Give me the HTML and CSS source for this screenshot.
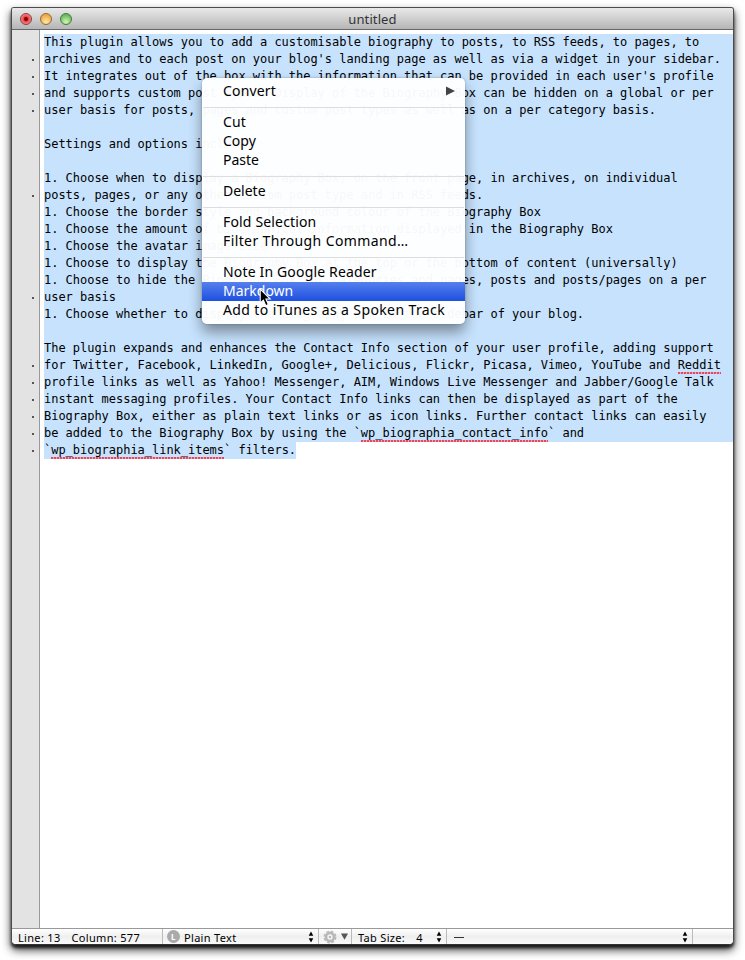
FILE: index.html
```html
<!DOCTYPE html>
<html lang="en">
<head>
<meta charset="utf-8">
<title>untitled</title>
<link rel="stylesheet" href="styles.css">
</head>
<body>
<div class="window">
<header class="titlebar"><div class="lights"><i class="light close"></i><i class="light minimize"></i><i class="light expand"></i></div><span>untitled</span></header>
<main class="editor">
<div class="gutter"></div>
<div class="lines">
<p>This plugin allows you to add a customisable biography to posts, to RSS feeds, to pages, to</p>
<p class="wrap">archives and to each post on your blog's landing page as well as via a widget in your sidebar.</p>
<p class="wrap">It integrates out of the box with the information that can be provided in each user's profile</p>
<p class="wrap">and supports custom post types. Display of the Biography Box can be hidden on a global or per</p>
<p class="wrap">user basis for posts, pages and custom post types as well as on a per category basis.</p>
<p></p>
<p>Settings and options include:</p>
<p></p>
<p>1. Choose when to display a Biography Box, on the front page, in archives, on individual</p>
<p class="wrap">posts, pages, or any other custom post type and in RSS feeds.</p>
<p>1. Choose the border style and background colour of the Biography Box</p>
<p>1. Choose the amount of biographical information displayed in the Biography Box</p>
<p>1. Choose the avatar image size</p>
<p>1. Choose to display the Biography Box at the top or the bottom of content (universally)</p>
<p>1. Choose to hide the Biography Box for categories and pages, posts and posts/pages on a per</p>
<p class="wrap">user basis</p>
<p>1. Choose whether to display the Biography Box in the sidebar of your blog.</p>
<p></p>
<p>The plugin expands and enhances the Contact Info section of your user profile, adding support</p>
<p class="wrap">for Twitter, Facebook, LinkedIn, Google+, Delicious, Flickr, Picasa, Vimeo, YouTube and <u>Reddit</u></p>
<p class="wrap">profile links as well as Yahoo! Messenger, AIM, Windows Live Messenger and Jabber/Google Talk</p>
<p class="wrap">instant messaging profiles. Your Contact Info links can then be displayed as part of the</p>
<p class="wrap">Biography Box, either as plain text links or as icon links. Further contact links can easily</p>
<p class="wrap">be added to the Biography Box by using the `<u>wp_biographia_contact_info</u>` and</p>
<p class="wrap last">`<u>wp_biographia_link_items</u>` filters.</p>
</div>
</main>
<footer class="status">
<div class="cell position"><span>Line: 13</span><span>Column: 577</span></div>
<div class="cell language"><b class="badge">L</b><span>Plain Text</span><svg class="step" viewBox="0 0 6 12"><path d="M3 .5 5.3 4.8H.7zM3 11.5 5.3 7.2H.7z"/></svg></div>
<div class="cell gear"><svg class="cog" viewBox="0 0 14 14"><circle cx="7" cy="7" r="5.7" fill="none" stroke="#b8b8b8" stroke-width="1.5" stroke-dasharray="2.8 1.68"/><circle cx="7" cy="7" r="4" fill="none" stroke="#b8b8b8" stroke-width="2.6"/><circle cx="7" cy="7" r="1.1" fill="#aaa"/></svg><svg class="drop" viewBox="0 0 7 7"><path d="M0 .5H7L3.5 6.8z"/></svg></div>
<div class="cell tabs"><span>Tab Size:</span><span class="four">4</span><svg class="step" viewBox="0 0 6 12"><path d="M3 .5 5.3 4.8H.7zM3 11.5 5.3 7.2H.7z"/></svg></div>
<div class="cell symbol"><span class="dash"></span><svg class="step" viewBox="0 0 6 12"><path d="M3 .5 5.3 4.8H.7zM3 11.5 5.3 7.2H.7z"/></svg></div>
</footer>
</div>
<nav class="menu">
<div class="item"><span class="slight">Convert</span><svg class="arrow" viewBox="0 0 9 10"><path d="M0 .5V9.5L9 5z"/></svg></div>
<hr>
<div class="item"><span class="slight">Cut</span></div>
<div class="item"><span>Copy</span></div>
<div class="item"><span>Paste</span></div>
<hr>
<div class="item"><span>Delete</span></div>
<hr>
<div class="item"><span class="slight">Fold Selection</span></div>
<div class="item"><span class="wide">Filter Through Command…</span></div>
<hr>
<div class="item"><span class="slight">Note In Google Reader</span></div>
<div class="item selected"><span>Markdown</span></div>
<div class="item"><span class="wide">Add to iTunes as a Spoken Track</span></div>
</nav>
<svg class="cursor" viewBox="0 0 12 18"><path d="M1 1V14.2L4 11.5 6.3 16.8 8.7 15.7 6.4 10.5H10.5z" fill="#000" stroke="#fff" stroke-width="1"/></svg>
</body>
</html>
```
FILE: styles.css
```css
* { box-sizing: border-box; }
body { margin: 0; padding: 7px 11px 0; width: 745px; height: 960px; overflow: hidden; background: #fff; font-family: "Noto Sans", sans-serif; }
.window { width: 723px; height: 938px; border: 1px solid #4b4b4b; border-bottom-color: #333; border-radius: 3px 3px 5px 5px; overflow: hidden; display: flex; flex-direction: column; box-shadow: 0 3px 3px rgba(0,0,0,.7), 0 5px 10px rgba(0,0,0,.75); background: #fff; }
.titlebar { height: 22px; flex: none; position: relative; display: flex; align-items: center; justify-content: center; background: linear-gradient(#e9e9e9, #b5b5b5); border-bottom: 1px solid #686868; font-size: 13px; letter-spacing: .1px; color: #333; }
.lights { position: absolute; left: 8px; top: 5px; display: flex; gap: 8px; }
.light { width: 12px; height: 12px; border-radius: 50%; border: 1px solid #666; }
.close { border-color: #8f3a3c; background: radial-gradient(circle at 50% 50%, #8d0000 0 1.5px, #e9474a 2.5px, #f8a0a0 6px); }
.minimize { border-color: #97692f; background: radial-gradient(circle at 50% 80%, #ffe8a5, #eda744 75%); }
.expand { border-color: #46793f; background: radial-gradient(circle at 50% 80%, #d1f8b5, #68b85c 75%); }
.editor { flex: 1; display: flex; min-height: 0; }
.gutter { width: 28px; flex: none; background: #e3e3e3; border-right: 1px solid #999; }
.lines { flex: 1; padding: 4px 0 0 4px; font: 12px/17px "DejaVu Sans Mono", monospace; letter-spacing: -.024px; color: #000; }
.lines p { margin: 0; height: 17px; white-space: pre; background: #c6e2fd; position: relative; }
.lines .last { width: 252px; }
.wrap::before { content: ""; position: absolute; left: -12px; top: 8px; width: 2px; height: 2px; background: #555; }
.lines u { text-decoration: none; background: repeating-linear-gradient(90deg, #e14b62 0 2px, #efa5b8 2px 3px) left bottom / 100% 2px no-repeat; padding-bottom: 2px; }
.status { height: 16px; flex: none; display: flex; border-top: 1px solid #999; background: linear-gradient(#fff, #efefef 50%, #fafafa); font-size: 11px; letter-spacing: .32px; line-height: 15px; color: #000; }
.cell { display: flex; align-items: center; border-right: 1px solid #bbb; white-space: nowrap; }
.cell span { position: relative; top: .5px; }
.position { width: 151px; padding-left: 6px; gap: 11px; }
.language { width: 156px; padding: 0 4px; }
.badge { width: 13px; height: 13px; border-radius: 50%; background: #aaa; color: #fff; font-size: 8px; line-height: 13px; text-align: center; margin-right: 4px; }
.step { width: 6px; height: 12px; margin-left: auto; }
.gear { width: 33px; padding-left: 4px; gap: 4px; }
.cog { width: 14px; height: 14px; }
.drop { width: 7px; height: 7px; fill: #555; }
.tabs { width: 95px; padding: 0 4px 0 6px; }
.four { margin-left: 11px; }
.symbol { width: 246px; padding: 0 4px 0 7px; }
.dash { width: 10px; height: 1px; background: #333; }
.menu { position: absolute; left: 202px; top: 78px; width: 263px; height: 246px; padding: 4px 0; background: rgba(255,255,255,.97); border-radius: 5px; box-shadow: 0 8px 14px rgba(0,0,0,.4), 0 0 2px rgba(0,0,0,.3); font-size: 14px; }
.item { height: 19px; line-height: 17px; padding: 0 10px 2px 21px; display: flex; align-items: center; justify-content: space-between; white-space: nowrap; }
.slight { letter-spacing: .16px; }
.wide { letter-spacing: .39px; }
.arrow { width: 9px; height: 10px; fill: #444; }
.menu hr { margin: 6px 1px 5px; height: 1px; border: 0; background: #ddd; }
.selected { color: #fff; background: linear-gradient(#5680ed, #1d50e0); }
.cursor { position: absolute; left: 259px; top: 288px; width: 13px; height: 19px; }
```
